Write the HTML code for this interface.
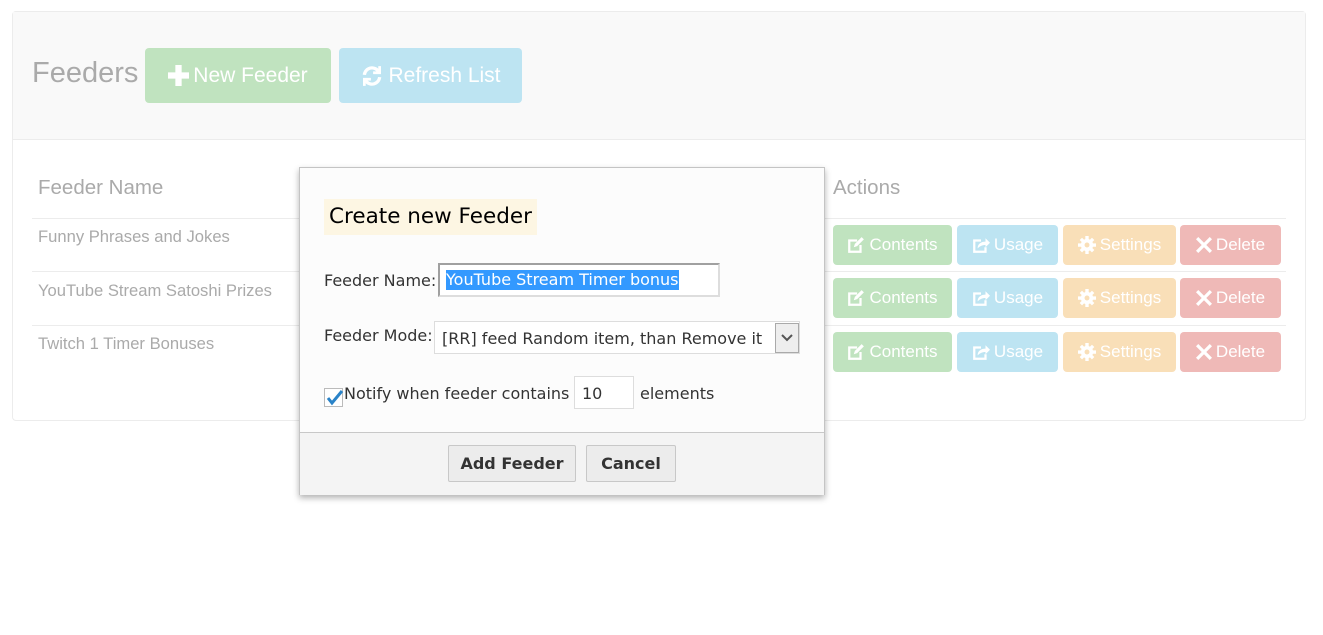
<!DOCTYPE html>
<html><head><meta charset="utf-8"><style>
*{box-sizing:border-box;margin:0;padding:0}
body{width:1323px;height:635px;background:#fff;position:relative;overflow:hidden;font-family:"Liberation Sans",Arial,sans-serif}
.a{position:absolute}
.panel{left:12px;top:11px;width:1294px;height:410px;border:1px solid #ececec;border-radius:4px;background:#fff}
.head{left:13px;top:12px;width:1292px;height:128px;background:#f9f9f9;border-bottom:1px solid #ececec}
.btn{position:absolute;border-radius:4px;color:#fff;font-size:17px;display:flex;align-items:center;justify-content:center;gap:4px}
.g{background:#c0e3bf}.b{background:#bde4f2}.o{background:#f9dfb8}.r{background:#efb9b7}
.gray{color:#aaa}
.line{position:absolute;left:32px;width:1254px;height:1px;background:#ececec}
.dlg{left:299px;top:167px;width:526px;height:328px;background:#fcfcfc;border:1px solid #c4c4c4;box-shadow:0 3px 6px rgba(0,0,0,.3)}
.d{font-family:"DejaVu Sans",Verdana,sans-serif;font-size:16px;color:#333}
.fb{position:absolute;top:277px;height:37px;background:#ececec;border:1px solid #c8c8c8;border-radius:2px;font-family:"DejaVu Sans",Verdana,sans-serif;font-weight:bold;font-size:16px;color:#333;display:flex;align-items:center;justify-content:center}
</style></head><body>
<div class="a panel"></div>
<div class="a head"></div>
<div class="a gray" style="left:32px;top:57px;font-size:29px">Feeders</div>
<div class="btn g" style="left:145px;top:48px;width:186px;height:55px;font-size:21px">
<svg width="21" height="21" viewBox="0 0 20 20"><path d="M7 0h6v7h7v6h-7v7H7v-7H0V7h7z" fill="#fff"/></svg>New Feeder</div>
<div class="btn b" style="left:339px;top:48px;width:183px;height:55px;font-size:21px">
<svg width="24" height="24" viewBox="0 0 22 22" fill="none" stroke="#fff" stroke-width="3"><path d="M4 10a7 7 0 0 1 13-3"/><path d="M18 12a7 7 0 0 1-13 3"/><path d="M18 2v6h-6" stroke-width="2.5"/><path d="M4 20v-6h6" stroke-width="2.5"/></svg>Refresh List</div>

<div class="a gray" style="left:38px;top:176px;font-size:20.5px">Feeder Name</div>
<div class="a gray" style="left:833px;top:176px;font-size:20.5px">Actions</div>
<div class="line" style="top:218px"></div>
<div class="line" style="top:271px"></div>
<div class="line" style="top:325px"></div>
<div class="a gray" style="left:38px;top:227px;font-size:16.6px">Funny Phrases and Jokes</div>
<div class="a gray" style="left:38px;top:281px;font-size:16.6px">YouTube Stream Satoshi Prizes</div>
<div class="a gray" style="left:38px;top:334px;font-size:16.6px">Twitch 1 Timer Bonuses</div>

<div class="btn g" style="left:833px;top:225px;width:119px;height:40px"><svg width="18" height="18" viewBox="0 0 16 16"><path d="M1 3h8v2H3v8h8V8h2v7H1z" fill="#fff"/><path d="M6 10l1-3 6-6 2 2-6 6z" fill="#fff"/></svg>Contents</div>
<div class="btn b" style="left:957px;top:225px;width:101px;height:40px"><svg width="18" height="18" viewBox="0 0 16 16"><path d="M1 3h7v2H3v8h8V10h2v5H1z" fill="#fff"/><path d="M5 11c0-4 3-6 7-6V2l4 4-4 4V8c-3 0-5 1-7 3z" fill="#fff"/></svg>Usage</div>
<div class="btn o" style="left:1063px;top:225px;width:113px;height:40px"><svg width="18" height="18" viewBox="0 0 16 16"><circle cx="8" cy="8" r="5.5" fill="#fff"/><path d="M6.5 0h3v16h-3zM0 6.5h16v3H0z" fill="#fff"/><path d="M1.5 3.6L3.6 1.5 14.5 12.4 12.4 14.5zM12.4 1.5L14.5 3.6 3.6 14.5 1.5 12.4z" fill="#fff"/><circle cx="8" cy="8" r="2.2" fill="#f9dfb8"/></svg>Settings</div>
<div class="btn r" style="left:1180px;top:225px;width:101px;height:40px"><svg width="16" height="16" viewBox="0 0 14 14"><path d="M2 0l5 5 5-5 2 2-5 5 5 5-2 2-5-5-5 5-2-2 5-5-5-5z" fill="#fff"/></svg>Delete</div>

<div class="btn g" style="left:833px;top:278px;width:119px;height:40px"><svg width="18" height="18" viewBox="0 0 16 16"><path d="M1 3h8v2H3v8h8V8h2v7H1z" fill="#fff"/><path d="M6 10l1-3 6-6 2 2-6 6z" fill="#fff"/></svg>Contents</div>
<div class="btn b" style="left:957px;top:278px;width:101px;height:40px"><svg width="18" height="18" viewBox="0 0 16 16"><path d="M1 3h7v2H3v8h8V10h2v5H1z" fill="#fff"/><path d="M5 11c0-4 3-6 7-6V2l4 4-4 4V8c-3 0-5 1-7 3z" fill="#fff"/></svg>Usage</div>
<div class="btn o" style="left:1063px;top:278px;width:113px;height:40px"><svg width="18" height="18" viewBox="0 0 16 16"><circle cx="8" cy="8" r="5.5" fill="#fff"/><path d="M6.5 0h3v16h-3zM0 6.5h16v3H0z" fill="#fff"/><path d="M1.5 3.6L3.6 1.5 14.5 12.4 12.4 14.5zM12.4 1.5L14.5 3.6 3.6 14.5 1.5 12.4z" fill="#fff"/><circle cx="8" cy="8" r="2.2" fill="#f9dfb8"/></svg>Settings</div>
<div class="btn r" style="left:1180px;top:278px;width:101px;height:40px"><svg width="16" height="16" viewBox="0 0 14 14"><path d="M2 0l5 5 5-5 2 2-5 5 5 5-2 2-5-5-5 5-2-2 5-5-5-5z" fill="#fff"/></svg>Delete</div>

<div class="btn g" style="left:833px;top:332px;width:119px;height:40px"><svg width="18" height="18" viewBox="0 0 16 16"><path d="M1 3h8v2H3v8h8V8h2v7H1z" fill="#fff"/><path d="M6 10l1-3 6-6 2 2-6 6z" fill="#fff"/></svg>Contents</div>
<div class="btn b" style="left:957px;top:332px;width:101px;height:40px"><svg width="18" height="18" viewBox="0 0 16 16"><path d="M1 3h7v2H3v8h8V10h2v5H1z" fill="#fff"/><path d="M5 11c0-4 3-6 7-6V2l4 4-4 4V8c-3 0-5 1-7 3z" fill="#fff"/></svg>Usage</div>
<div class="btn o" style="left:1063px;top:332px;width:113px;height:40px"><svg width="18" height="18" viewBox="0 0 16 16"><circle cx="8" cy="8" r="5.5" fill="#fff"/><path d="M6.5 0h3v16h-3zM0 6.5h16v3H0z" fill="#fff"/><path d="M1.5 3.6L3.6 1.5 14.5 12.4 12.4 14.5zM12.4 1.5L14.5 3.6 3.6 14.5 1.5 12.4z" fill="#fff"/><circle cx="8" cy="8" r="2.2" fill="#f9dfb8"/></svg>Settings</div>
<div class="btn r" style="left:1180px;top:332px;width:101px;height:40px"><svg width="16" height="16" viewBox="0 0 14 14"><path d="M2 0l5 5 5-5 2 2-5 5 5 5-2 2-5-5-5 5-2-2 5-5-5-5z" fill="#fff"/></svg>Delete</div>

<div class="a dlg">
  <div class="a d" style="left:24px;top:31px;width:213px;height:36px;background:#fdf6e3;color:#000;font-size:21.5px;line-height:36px;padding-left:5px;white-space:nowrap">Create new Feeder</div>
  <div class="a d" style="left:24px;top:103px">Feeder Name:</div>
  <div class="a" style="left:138px;top:95px;width:282px;height:34px;background:#fff;border:2px solid #a0a0a0;border-right-color:#ddd;border-bottom-color:#ddd"></div>
  <div class="a d" style="left:146px;top:102px;background:#3399ff;color:#fff;line-height:20px">YouTube Stream Timer bonus</div>
  <div class="a d" style="left:24px;top:158px">Feeder Mode:</div>
  <div class="a d" style="left:134px;top:153px;width:366px;height:33px;background:#fff;border:1px solid #ddd;padding:7px 0 0 7px;white-space:nowrap;overflow:hidden">[RR] feed Random item, than Remove it</div>
  <div class="a" style="left:475px;top:155px;width:24px;height:30px;background:#eee;border:1px solid #aaa;display:flex;align-items:center;justify-content:center"><svg width="12" height="8" viewBox="0 0 12 8"><path d="M1 1l5 5 5-5" stroke="#555" stroke-width="2" fill="none"/></svg></div>
  <div class="a" style="left:24px;top:220px;width:19px;height:19px;border:1px solid #bbb;background:#fff"></div>
  <svg class="a" style="left:26px;top:220px" width="18" height="18" viewBox="0 0 18 18"><path d="M2 10l4 5 10-12" stroke="#2a83c8" stroke-width="3" fill="none"/></svg>
  <div class="a d" style="left:44px;top:216px">Notify when feeder contains</div>
  <div class="a d" style="left:274px;top:208px;width:60px;height:33px;background:#fff;border:1px solid #ddd;padding:7px 0 0 7px">10</div>
  <div class="a d" style="left:340px;top:216px">elements</div>
  <div class="a" style="left:0;top:264px;width:524px;height:63px;background:#f4f4f4;border-top:1px solid #c8c8c8"></div>
  <div class="fb" style="left:148px;width:128px">Add Feeder</div>
  <div class="fb" style="left:286px;width:90px">Cancel</div>
</div>
</body></html>
